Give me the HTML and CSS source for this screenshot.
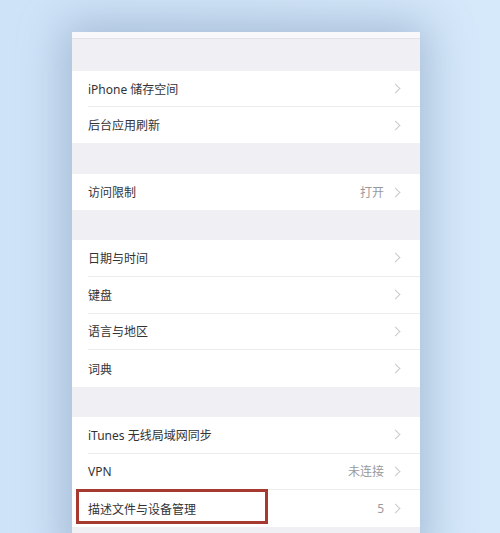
FILE: index.html
```html
<!DOCTYPE html>
<html lang="zh-CN">
<head>
<meta charset="utf-8">
<title>通用</title>
<link rel="stylesheet" href="styles.css">
</head>
<body>
<div class="stage">
  <div class="panel">
    <div class="top-strip"></div>
    <div class="gap g32"></div>
    <div class="group">
      <div class="row r36"><span class="label">iPhone 储存空间</span><span class="chev"></span></div>
      <div class="row r36 last"><span class="label">后台应用刷新</span><span class="chev"></span></div>
    </div>
    <div class="gap g31"></div>
    <div class="group">
      <div class="row r36 last"><span class="label">访问限制</span><span class="value">打开</span><span class="chev"></span></div>
    </div>
    <div class="gap g30"></div>
    <div class="group">
      <div class="row r37"><span class="label">日期与时间</span><span class="chev"></span></div>
      <div class="row r37"><span class="label">键盘</span><span class="chev"></span></div>
      <div class="row r37"><span class="label">语言与地区</span><span class="chev"></span></div>
      <div class="row r37 last"><span class="label">词典</span><span class="chev"></span></div>
    </div>
    <div class="gap g30"></div>
    <div class="group">
      <div class="row r367"><span class="label">iTunes 无线局域网同步</span><span class="chev"></span></div>
      <div class="row r367"><span class="label">VPN</span><span class="value">未连接</span><span class="chev"></span></div>
      <div class="row r367 last highlighted"><span class="label">描述文件与设备管理</span><span class="value">5</span><span class="chev"></span><span class="mark"></span></div>
    </div>
    <div class="gap g30"></div>
  </div>
</div>
</body>
</html>
```

FILE: styles.css
```css
html, body {
  margin: 0;
  padding: 0;
}
body {
  width: 500px;
  height: 533px;
  overflow: hidden;
  background: linear-gradient(90deg, #cfe3f8 0%, #d2e5f8 50%, #d6e9fb 100%);
  font-family: "Noto Sans", "Noto Sans CJK SC", sans-serif;
}
.stage {
  padding: 32px 0 0 72px;
}
.panel {
  width: 348px;
  background: #efeff4;
  box-shadow: 0 0 42px 8px rgba(95, 125, 160, 0.4);
}
.top-strip {
  height: 6px;
  background: #f8f8fa;
  border-bottom: 1px solid #e4e4e8;
}
.gap { background: #efeff4; }
.g32 { height: 32px; }
.g31 { height: 31px; }
.g30 { height: 30px; }
.group {
  background: #ffffff;
  padding-left: 16px;
}
.row {
  position: relative;
  display: flex;
  align-items: center;
  padding-right: 19px;
  box-sizing: border-box;
  border-bottom: 1px solid #ececef;
}
.row.last { border-bottom: none; }
.r36 { height: 36px; }
.r37 { height: 36.75px; }
.r367 { height: 36.67px; }
.label {
  flex: 1;
  font-size: 12px;
  color: #333335;
}
.value {
  font-size: 12px;
  color: #9a9a9e;
  margin-right: 8px;
}
.chev {
  width: 6px;
  height: 6px;
  border-top: 1.5px solid #c9c9ce;
  border-right: 1.5px solid #c9c9ce;
  transform: rotate(45deg);
  margin-right: 2px;
}
.mark {
  position: absolute;
  left: -12px;
  top: -1px;
  width: 192px;
  height: 35px;
  box-sizing: border-box;
  border: 3px solid #a63a31;
}
```
